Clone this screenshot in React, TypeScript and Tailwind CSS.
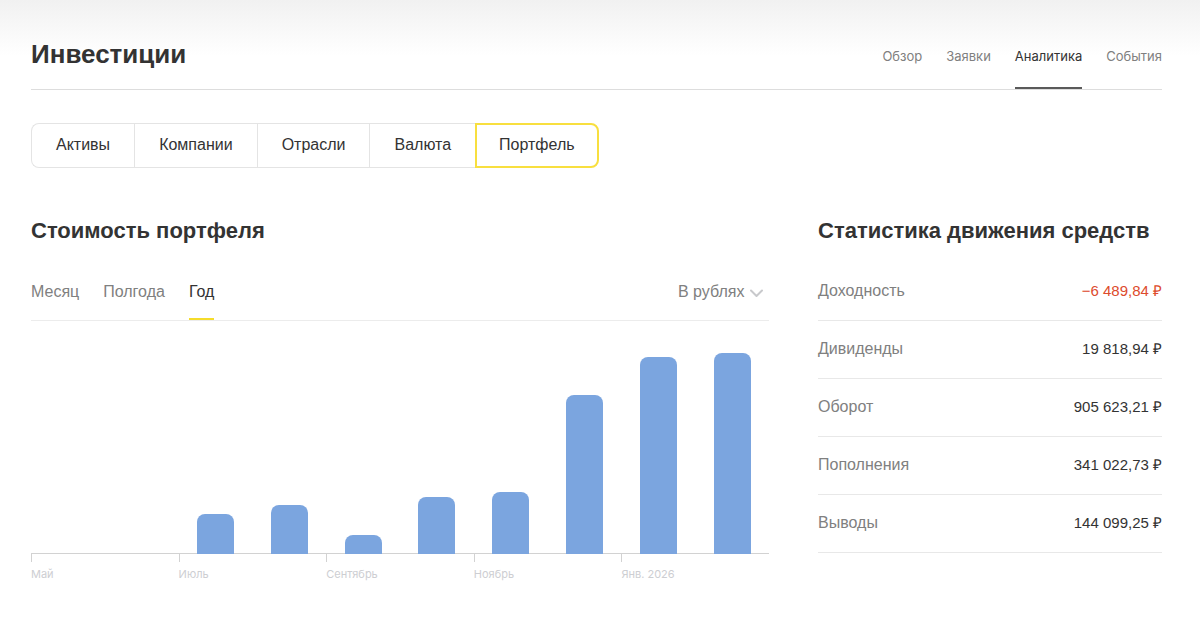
import React, { useState } from 'react';
import clsx from 'clsx';

interface ChartBar {
  id: string;
  height: number;
}

interface StatRow {
  label: string;
  value: string;
  negative?: boolean;
}

const SECTIONS = ['Обзор', 'Заявки', 'Аналитика', 'События'];
const BREAKDOWNS = ['Активы', 'Компании', 'Отрасли', 'Валюта', 'Портфель'];
const PERIODS = ['Месяц', 'Полгода', 'Год'];

// bar heights in px, one per month starting from May
const BARS: ChartBar[] = [
  { id: '05', height: 0 },
  { id: '06', height: 0 },
  { id: '07', height: 40 },
  { id: '08', height: 49 },
  { id: '09', height: 19 },
  { id: '10', height: 57 },
  { id: '11', height: 62 },
  { id: '12', height: 159 },
  { id: '01', height: 197 },
  { id: '02', height: 201 },
];

// every second month gets a tick
const TICKS = ['Май', 'Июль', 'Сентябрь', 'Ноябрь', 'Янв. 2026'];

const STATS: StatRow[] = [
  { label: 'Доходность', value: '−6 489,84 ₽', negative: true },
  { label: 'Дивиденды', value: '19 818,94 ₽' },
  { label: 'Оборот', value: '905 623,21 ₽' },
  { label: 'Пополнения', value: '341 022,73 ₽' },
  { label: 'Выводы', value: '144 099,25 ₽' },
];

const Header: React.FC = () => (
  <header className="flex items-stretch justify-between border-b border-[#dddddd]">
    <h1 className="pt-9 pb-4 text-[26px] leading-[37px] font-bold">Инвестиции</h1>
    <nav className="flex gap-6 font-['Inter',sans-serif]">
      {SECTIONS.map(section => {
        const isActive = section === 'Аналитика';
        return (
          <a
            key={section}
            href="#"
            aria-current={isActive ? 'page' : undefined}
            className={clsx(
              'flex border-b-2 pt-[46px] text-[13px] leading-5',
              isActive ? 'border-[#5a5a5a] text-[#333333]' : 'border-transparent text-[#808080]'
            )}
          >
            {section}
          </a>
        );
      })}
    </nav>
  </header>
);

const BreakdownSwitch: React.FC = () => {
  const [active, setActive] = useState('Портфель');

  return (
    <div className="mt-[33px] flex">
      {BREAKDOWNS.map(item => (
        <button
          key={item}
          type="button"
          aria-pressed={item === active}
          onClick={() => setActive(item)}
          className={clsx(
            'h-[45px] pb-0.5 text-base first:rounded-l-lg last:rounded-r-lg',
            item === active
              ? 'border-2 border-[#f8df3f] px-[22px]'
              : 'border border-r-0 border-[#e4e4e4] px-6'
          )}
        >
          {item}
        </button>
      ))}
    </div>
  );
};

const PortfolioChart: React.FC = () => (
  <div>
    <div className="flex h-[233px] items-end border-b border-[#d2d2d2]">
      {BARS.map(bar => (
        <div key={bar.id} className="flex flex-1 justify-center">
          <div
            className="-mb-px w-1/2 rounded-t-lg bg-[#7ba5df]"
            style={{ height: bar.height }}
          />
        </div>
      ))}
    </div>
    <div className="grid grid-cols-5">
      {TICKS.map(tick => (
        <div
          key={tick}
          className="font-['Inter',sans-serif] text-[11px] leading-4 text-[#cdced2]"
        >
          <div className="mb-1 h-2 border-l border-[#d2d2d2]" />
          {tick}
        </div>
      ))}
    </div>
  </div>
);

const PortfolioValue: React.FC = () => {
  const [period, setPeriod] = useState('Год');

  return (
    <section className="min-w-0 flex-[738]">
      <h2 className="text-[22px] leading-8 font-bold">Стоимость портфеля</h2>
      <div className="mt-[15px] flex h-[59px] justify-between border-b border-[#ececec]">
        <div className="flex gap-6">
          {PERIODS.map(item => (
            <button
              key={item}
              type="button"
              aria-pressed={item === period}
              onClick={() => setPeriod(item)}
              className={clsx(
                'border-b-2 pt-1 text-base',
                item === period ? 'border-[#f5dc2b]' : 'border-transparent text-[#808080]'
              )}
            >
              {item}
            </button>
          ))}
        </div>
        <div className="relative flex items-center">
          <select
            aria-label="В рублях"
            className="h-full appearance-none bg-transparent pt-0.5 pr-6 text-base text-[#808080]"
          >
            <option>В рублях</option>
          </select>
          <svg
            className="pointer-events-none absolute right-1.5 mt-1"
            width="13"
            height="9"
            viewBox="0 0 13 9"
            fill="none"
            stroke="#c8c9cc"
            strokeWidth="2"
            aria-hidden="true"
          >
            <path d="M1 1.5 6.5 7 12 1.5" strokeLinecap="round" strokeLinejoin="round" />
          </svg>
        </div>
      </div>
      <PortfolioChart />
    </section>
  );
};

const CashFlowStats: React.FC = () => (
  <section className="min-w-0 flex-[344]">
    <h2 className="text-[22px] leading-8 font-bold whitespace-nowrap">
      Статистика движения средств
    </h2>
    <table className="mt-[15px] w-full border-collapse">
      <tbody>
        {STATS.map(row => (
          <tr key={row.label} className="h-[58px] border-b border-[#e8e8e8]">
            <th scope="row" className="p-0 text-left text-base font-normal text-[#808080]">
              {row.label}
            </th>
            <td className={clsx('p-0 text-right text-[15px]', row.negative && 'text-[#dd4b2d]')}>
              {row.value}
            </td>
          </tr>
        ))}
      </tbody>
    </table>
  </section>
);

export default function App() {
  return (
    <div className="min-h-screen bg-white bg-linear-to-b from-[#f1f1f1] to-white to-[56px] pr-[38px] pb-10 pl-[31px] font-['Liberation_Sans',sans-serif] text-[#333333]">
      <Header />
      <BreakdownSwitch />
      <main className="mt-[47px] flex gap-[49px]">
        <PortfolioValue />
        <CashFlowStats />
      </main>
    </div>
  );
}
